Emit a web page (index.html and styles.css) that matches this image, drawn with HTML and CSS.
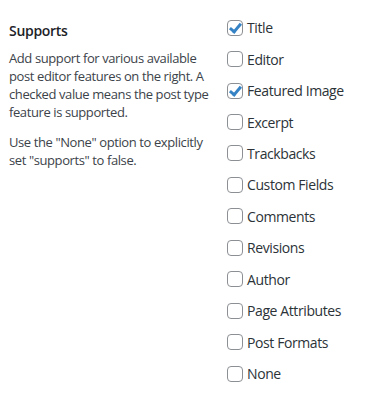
FILE: index.html
```html
<!DOCTYPE html>
<html lang="en">
<head>
    <meta charset="UTF-8">
    <title>Supports</title>
    <link rel="stylesheet" href="styles.css">
</head>
<body>
    <table class="form-table">
        <tr>
            <th>
                <h3>Supports</h3>
                <p>Add support for various available post editor features on the right. A checked value means the post type feature is supported.</p>
                <p>Use the "None" option to explicitly set "supports" to false.</p>
            </th>
            <td>
                <label class="opt"><input type="checkbox" checked> Title</label>
                <label class="opt"><input type="checkbox"> Editor</label>
                <label class="opt"><input type="checkbox" checked> Featured Image</label>
                <label class="opt"><input type="checkbox"> Excerpt</label>
                <label class="opt"><input type="checkbox"> Trackbacks</label>
                <label class="opt"><input type="checkbox"> Custom Fields</label>
                <label class="opt"><input type="checkbox"> Comments</label>
                <label class="opt"><input type="checkbox"> Revisions</label>
                <label class="opt"><input type="checkbox"> Author</label>
                <label class="opt"><input type="checkbox"> Page Attributes</label>
                <label class="opt"><input type="checkbox"> Post Formats</label>
                <label class="opt"><input type="checkbox"> None</label>
            </td>
        </tr>
    </table>
</body>
</html>
```

FILE: styles.css
```css
body {
    margin: 0;
    background: #fff;
    font-family: "Open Sans", sans-serif;
    font-size: 13px;
    color: #3c434a;
}
.form-table {
    border-collapse: collapse;
}
.form-table th {
    width: 200px;
    padding: 22px 18px 0 9px;
    vertical-align: top;
    text-align: left;
    font-weight: normal;
}
.form-table td {
    padding: 12px 0 0 0;
    vertical-align: top;
}
h3 {
    margin: 0 0 9px;
    font-size: 14px;
    font-weight: 600;
    color: #1d2327;
    line-height: 1.3;
    letter-spacing: -0.3px;
}
p {
    margin: 0 0 12px;
    line-height: 18px;
    letter-spacing: -0.4px;
}
.opt {
    display: flex;
    align-items: center;
    gap: 4px;
    height: 31.45px;
    color: #2c3338;
    font-size: 14px;
    letter-spacing: -0.4px;
}
input[type=checkbox] {
    appearance: none;
    width: 16px;
    height: 16px;
    margin: 0;
    border: 1px solid #8c8f94;
    border-radius: 4px;
    background: #fff;
    position: relative;
}
input[type=checkbox]:checked::before {
    content: "";
    position: absolute;
    left: 4px;
    top: 0px;
    width: 4px;
    height: 9px;
    border: solid #3582c4;
    border-width: 0 3px 3px 0;
    transform: rotate(40deg);
}
```
